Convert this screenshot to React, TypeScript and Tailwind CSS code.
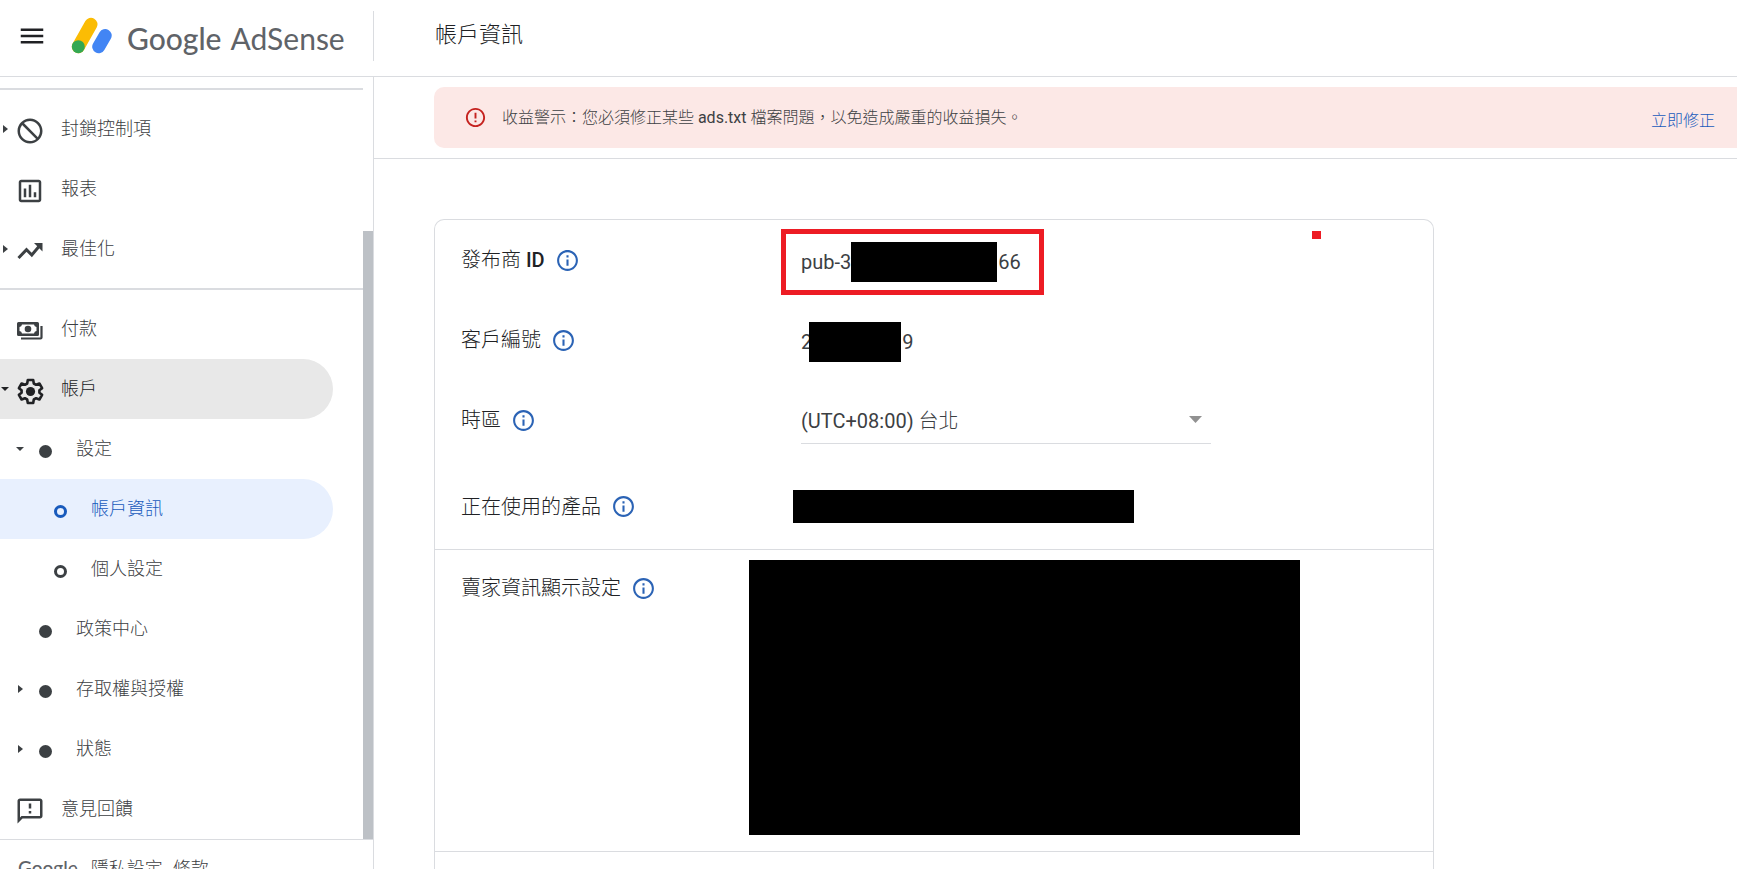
import React from "react";
import { MdBlock, MdOutlineInsertChart, MdOutlineFeedback, MdOutlineInfo, MdErrorOutline, MdMenu } from "react-icons/md";

function LogoMark() {
  return (
    <svg width="42" height="37" viewBox="0 0 42 37" aria-hidden="true">
      <line x1="7.300" y1="29.700" x2="20" y2="7.300" stroke="#fbbc04" strokeWidth="13" strokeLinecap="round" />
      <circle cx="7.300" cy="29.700" r="6.500" fill="#34a853" />
      <line x1="27.700" y1="29.700" x2="34.200" y2="18.500" stroke="#4285f4" strokeWidth="13" strokeLinecap="round" />
    </svg>
  );
}

function TrendIcon() {
  return (
    <svg width="26" height="26" viewBox="0 0 26 26" fill="none" aria-hidden="true">
      <path d="M1.500 20l8-8.300 5.300 5.300 8-9.500" stroke="currentColor" strokeWidth="3" />
      <path d="M17 5h8.500v8.500z" fill="currentColor" />
    </svg>
  );
}

function PaymentsIcon() {
  return (
    <svg width="26" height="26" viewBox="0 0 26 26" fill="none" aria-hidden="true">
      <path
        fillRule="evenodd"
        d="M1.500 4h19a1.500 1.500 0 0 1 1.500 1.500v11a1.500 1.500 0 0 1-1.500 1.500h-19A1.500 1.500 0 0 1 0 16.500v-11A1.500 1.500 0 0 1 1.500 4zM5 6.500A3 3 0 0 1 2.500 9v4A3 3 0 0 1 5 15.500h12A3 3 0 0 1 19.500 13V9A3 3 0 0 1 17 6.500z"
        fill="currentColor"
      />
      <circle cx="11" cy="11" r="3.300" fill="currentColor" />
      <path d="M24.500 8v11.500a1 1 0 0 1-1 1H4" stroke="currentColor" strokeWidth="2.200" />
    </svg>
  );
}

function GearIcon() {
  return (
    <svg width="27" height="27" viewBox="0 0 27 27" fill="none" aria-hidden="true">
      <path
        d="M10.800 2h5.400l.6 3.500 2.300 1.300 3.300-1.300 2.700 4.700-2.700 2.100v2.400l2.700 2.100-2.700 4.700-3.300-1.300-2.300 1.300-.6 3.500h-5.400l-.6-3.500-2.300-1.300-3.300 1.300-2.700-4.700 2.700-2.100v-2.400l-2.700-2.100 2.700-4.700 3.300 1.300 2.300-1.300z"
        stroke="currentColor"
        strokeWidth="2.600"
        strokeLinejoin="round"
      />
      <circle cx="13.500" cy="13.500" r="4.600" fill="currentColor" />
    </svg>
  );
}

type Item = {
  label: string;
  depth: 0 | 1 | 2;
  arrow?: "right" | "down";
  icon: React.ReactNode;
  state?: "open" | "current";
};

const dot = <span className="size-[13px] rounded-full bg-current" />;
const ring = <span className="size-[13px] rounded-full border-[3px] border-current" />;

const topItems: Item[] = [
  { label: "封鎖控制項", depth: 0, arrow: "right", icon: <MdBlock className="size-[30px] -scale-x-100" /> },
  { label: "報表", depth: 0, icon: <MdOutlineInsertChart className="size-[30px]" /> },
  { label: "最佳化", depth: 0, arrow: "right", icon: <TrendIcon /> },
];

const bottomItems: Item[] = [
  { label: "付款", depth: 0, icon: <PaymentsIcon /> },
  { label: "帳戶", depth: 0, arrow: "down", icon: <GearIcon />, state: "open" },
  { label: "設定", depth: 1, arrow: "down", icon: dot },
  { label: "帳戶資訊", depth: 2, icon: ring, state: "current" },
  { label: "個人設定", depth: 2, icon: ring },
  { label: "政策中心", depth: 1, icon: dot },
  { label: "存取權與授權", depth: 1, arrow: "right", icon: dot },
  { label: "狀態", depth: 1, arrow: "right", icon: dot },
  { label: "意見回饋", depth: 0, icon: <MdOutlineFeedback className="size-[30px]" /> },
];

const indent = { 0: "pl-0", 1: "pl-[15px]", 2: "pl-[30px]" };
const tone = {
  none: "text-[#3c4043]",
  open: "bg-[#e8e8e8] text-[#202124]",
  current: "bg-[#e8f0fe] text-[#185abc]",
};

function NavItem({ item }: { item: Item }) {
  return (
    <li>
      <a
        href="#"
        aria-current={item.state === "current" ? "page" : undefined}
        className={`mr-[30px] flex h-[60px] items-center rounded-r-full ${indent[item.depth]} ${tone[item.state ?? "none"]}`}
      >
        <span className="flex w-[10px] justify-center">
          {item.arrow === "right" && (
            <svg width="5" height="8" viewBox="0 0 5 8" aria-hidden="true"><path d="M0 0l5 4-5 4z" fill="currentColor" /></svg>
          )}
          {item.arrow === "down" && (
            <svg width="8" height="4" viewBox="0 0 8 4" aria-hidden="true"><path d="M0 0h8L4 4z" fill="currentColor" /></svg>
          )}
        </span>
        <span className="flex w-10 justify-center pt-1">{item.icon}</span>
        <span className="pl-[11px] text-[18px] leading-6 font-light">{item.label}</span>
      </a>
    </li>
  );
}

function Label({ children, name, htmlFor }: { children: React.ReactNode; name: string; htmlFor?: string }) {
  return (
    <div className="flex items-center gap-2.5 text-[20px] leading-7 font-light text-[#202124]">
      {htmlFor ? <label htmlFor={htmlFor}>{children}</label> : <span>{children}</span>}
      <button type="button" aria-label={`${name}說明`} className="text-[#2b63b5]">
        <MdOutlineInfo className="size-[25px]" />
      </button>
    </div>
  );
}

const row = "grid grid-cols-[340px_1fr] items-center pl-[26px]";
const value = "flex items-center pt-1 text-[20px] leading-7 text-[#3c4043]";

export default function App() {
  return (
    <div className="flex h-screen flex-col overflow-hidden bg-white font-[Roboto,'Noto_Sans_CJK_TC',sans-serif] text-[#202124]">
      <header className="flex h-[77px] shrink-0 items-start border-b border-[#dadce0] pt-[11px]">
        <div className="flex h-[50px] w-[374px] shrink-0 items-center border-r border-[#dadce0] pl-[17px]">
          <button type="button" aria-label="選單"><MdMenu className="size-[30px]" /></button>
          <a href="#" className="flex items-start gap-[14px] pl-[24px] text-[#5f6368]">
            <LogoMark />
            <span className="flex items-baseline gap-[9px] pt-[3px] font-[Lato,sans-serif] text-[30px] leading-9 whitespace-nowrap">
              <span className="font-medium">Google</span>
              <span>AdSense</span>
            </span>
          </a>
        </div>
        <h1 className="pt-2 pl-[61px] text-[22px] leading-8 font-light">帳戶資訊</h1>
      </header>

      <div className="flex min-h-0 flex-1 items-start">
        <aside className="w-[374px] shrink-0 border-r border-[#dadce0]">
          <div className="flex">
            <nav className="flex-1 pt-[11px]" aria-label="主選單">
              <hr className="mb-[9px] border-t-2 border-[#dadce0]" />
              <ul>{topItems.map((i) => <NavItem key={i.label} item={i} />)}</ul>
              <hr className="my-[9px] border-t-2 border-[#dadce0]" />
              <ul>{bottomItems.map((i) => <NavItem key={i.label} item={i} />)}</ul>
            </nav>
            <div className="flex w-[10px] flex-col justify-end">
              <div className="h-[608px] bg-[#bdc1c6]" />
            </div>
          </div>
          <footer className="flex h-[58px] items-center gap-2.5 border-t border-[#dadce0] pl-[18px] text-[18px] font-light text-[#3c4043]">
            <span className="pr-[3px] font-[Lato,sans-serif] text-[19px] font-medium text-[#5f6368]">Google</span>
            <a href="#">隱私設定</a>
            <a href="#">條款</a>
          </footer>
        </aside>

        <main className="min-w-0 flex-1">
          <div className="border-b border-[#dadce0] py-[10px] pl-[60px]">
            <div role="alert" className="flex h-[61px] items-center rounded-l-[10px] bg-[#fce8e6] pr-[22px] pl-[30px]">
              <MdErrorOutline className="size-[23px] shrink-0 text-[#c5221f]" />
              <p className="flex-1 pl-[15px] text-[16px] leading-6 font-light text-[#3c4043]">
                收益警示：您必須修正某些 <span className="font-normal">ads.txt</span> 檔案問題，以免造成嚴重的收益損失。
              </p>
              <a href="#" className="pt-1.5 text-[16px] leading-6 font-light text-[#185abc]">立即修正</a>
            </div>
          </div>

          <section className="relative mt-[60px] ml-[60px] max-w-[1000px] rounded-t-[10px] border border-b-0 border-[#dadce0]">
            <span className="absolute top-[11px] right-[112px] h-2 w-[9px] bg-[#ed1c24]" />
            <div className={`${row} h-20`}>
              <Label name="發布商 ID">發布商 <span className="font-medium">ID</span></Label>
              <div className={value}>
                <div className="-ml-5 flex h-[66px] w-[263px] items-center border-[5px] border-[#ed1c24] px-[15px]">
                  pub-3<span className="mr-px h-10 w-[146px] bg-black" />66
                </div>
              </div>
            </div>
            <div className={`${row} h-20`}>
              <Label name="客戶編號">客戶編號</Label>
              <div className={value}>
                2<span className="mr-px -ml-[3px] h-10 w-[92px] bg-black" />9
              </div>
            </div>
            <div className={`${row} h-20`}>
              <Label name="時區" htmlFor="timezone">時區</Label>
              <div className="flex h-12 w-[410px] items-center border-b border-[#dadce0] pr-[9px]">
                <select id="timezone" className="h-8 flex-1 appearance-none pt-0.5 font-[Roboto,'Noto_Sans_CJK_TC_Light','Noto_Sans_CJK_TC',sans-serif] text-[20px] leading-7 text-[#3c4043]">
                  <option>(UTC+08:00) 台北</option>
                </select>
                <svg width="13" height="7" viewBox="0 0 13 7" aria-hidden="true"><path d="M0 0h13L6.500 7z" fill="#919191" /></svg>
              </div>
            </div>
            <div className={`${row} h-[90px] border-b border-[#dadce0] pt-1`}>
              <Label name="正在使用的產品">正在使用的產品</Label>
              <div className="-ml-2 h-[33px] w-[341px] bg-black" />
            </div>
            <div className="grid grid-cols-[288px_1fr] items-start border-b border-[#dadce0] pt-[10px] pb-4 pl-[26px]">
              <div className="pt-[14px]"><Label name="賣家資訊顯示設定">賣家資訊顯示設定</Label></div>
              <div className="h-[275px] w-[551px] bg-black" />
            </div>
            <div className="h-20" />
          </section>
        </main>
      </div>
    </div>
  );
}
